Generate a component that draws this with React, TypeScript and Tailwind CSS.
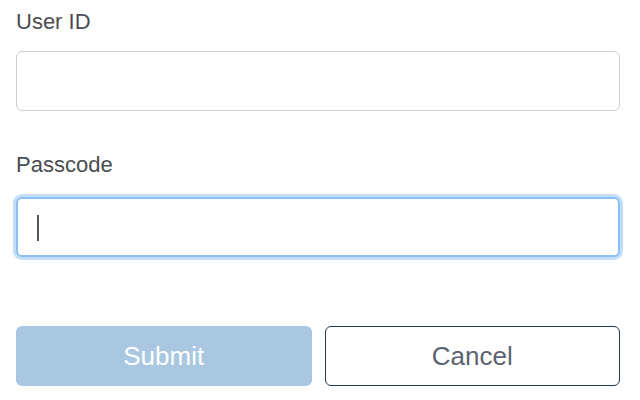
import React from "react";

export default function App() {
  return (
    <div
      className="w-[640px] h-[400px] bg-white pl-4 pr-5 pt-[9px] overflow-hidden"
      style={{ fontFamily: '"Liberation Sans", Arial, sans-serif' }}
    >
      <label className="block text-[22px] leading-[25px] text-[#4a4d52]">User ID</label>
      <input
        type="text"
        className="mt-[17px] block w-full h-[60px] rounded-[6px] border border-[#cbd0d5] bg-white outline-none"
      />
      <label className="block mt-[41px] text-[22px] leading-[25px] text-[#4a4d52]">Passcode</label>
      <div className="mt-[20px] relative h-[60px] w-full rounded-[6px] border-2 border-[#8ebff2] bg-white shadow-[0_0_0_3px_#c3defb]">
        <div className="absolute left-[19px] top-[16px] w-[2px] h-[26px] bg-[#555]" />
      </div>
      <div className="mt-[69px] grid grid-cols-2 gap-[13px]">
        <button className="h-[60px] rounded-[6px] bg-[#a9c7e1] text-white text-[26px]">Submit</button>
        <button className="h-[60px] rounded-[6px] border border-[#2b3a4a] bg-white text-[#5b6370] text-[26px]">
          Cancel
        </button>
      </div>
    </div>
  );
}
